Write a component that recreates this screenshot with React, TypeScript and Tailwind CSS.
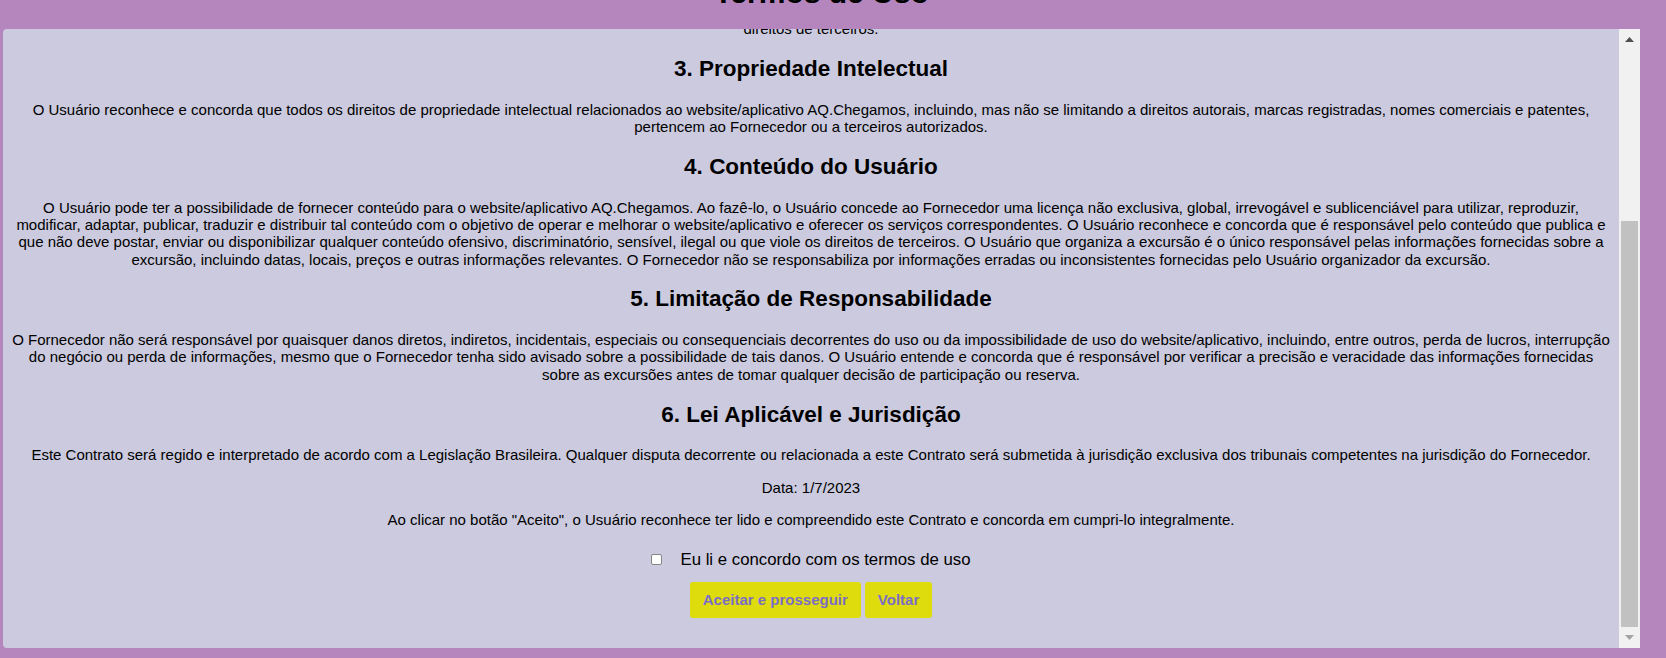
import React from "react";

const font = { fontFamily: '"Liberation Sans", Arial, sans-serif' };

function H({ children }: { children: React.ReactNode }) {
  return (
    <h2 className="text-[22.5px] leading-[26px] font-bold text-black text-center my-[18.7px]">
      {children}
    </h2>
  );
}

function P({ children }: { children: React.ReactNode }) {
  return (
    <p className="text-[15px] leading-[17.25px] text-black text-center my-[15px]">
      {children}
    </p>
  );
}

export default function App() {
  return (
    <div
      className="h-[658px] w-full bg-[#b586bd] flex flex-col overflow-hidden"
      style={font}
    >
      <h1 className="text-[30px] leading-[34.5px] font-bold text-black text-center -mt-[24px] mb-[18px] ml-[3px] mr-[26px]">
        Termos de Uso
      </h1>
      <div className="flex-1 mb-[10px] ml-[3px] mr-[26px] flex min-h-0">
        <div className="flex-1 bg-[#cbcade] rounded-l-[4px] overflow-hidden flex flex-col justify-end px-2">
          <div className="pb-[30px]">
            <H>2. Uso do Website/Aplicativo</H>
            <P>
              O Usuário concorda em utilizar o website/aplicativo AQ.Chegamos apenas para fins legais e de acordo com estes
              Termos de Uso, não podendo utilizá-lo de forma que possa prejudicar o seu funcionamento ou violar os
              <br />
              direitos de terceiros.
            </P>
            <H>3. Propriedade Intelectual</H>
            <P>
              O Usuário reconhece e concorda que todos os direitos de propriedade intelectual relacionados ao
              website/aplicativo AQ.Chegamos, incluindo, mas não se limitando a direitos autorais, marcas registradas, nomes
              comerciais e patentes, pertencem ao Fornecedor ou a terceiros autorizados.
            </P>
            <H>4. Conteúdo do Usuário</H>
            <P>
              O Usuário pode ter a possibilidade de fornecer conteúdo para o website/aplicativo AQ.Chegamos. Ao fazê-lo, o
              Usuário concede ao Fornecedor uma licença não exclusiva, global, irrevogável e sublicenciável para utilizar,
              reproduzir, modificar, adaptar, publicar, traduzir e distribuir tal conteúdo com o objetivo de operar e
              melhorar o website/aplicativo e oferecer os serviços correspondentes. O Usuário reconhece e concorda que é
              responsável pelo conteúdo que publica e que não deve postar, enviar ou disponibilizar qualquer conteúdo
              ofensivo, discriminatório, sensível, ilegal ou que viole os direitos de terceiros. O Usuário que organiza a
              excursão é o único responsável pelas informações fornecidas sobre a excursão, incluindo datas, locais, preços
              e outras informações relevantes. O Fornecedor não se responsabiliza por informações erradas ou inconsistentes
              fornecidas pelo Usuário organizador da excursão.
            </P>
            <H>5. Limitação de Responsabilidade</H>
            <P>
              O Fornecedor não será responsável por quaisquer danos diretos, indiretos, incidentais, especiais ou
              consequenciais decorrentes do uso ou da impossibilidade de uso do website/aplicativo, incluindo, entre outros,
              perda de lucros, interrupção do negócio ou perda de informações, mesmo que o Fornecedor tenha sido avisado
              sobre a possibilidade de tais danos. O Usuário entende e concorda que é responsável por verificar a precisão e
              veracidade das informações fornecidas sobre as excursões antes de tomar qualquer decisão de participação ou
              reserva.
            </P>
            <H>6. Lei Aplicável e Jurisdição</H>
            <P>
              Este Contrato será regido e interpretado de acordo com a Legislação Brasileira. Qualquer disputa decorrente ou
              relacionada a este Contrato será submetida à jurisdição exclusiva dos tribunais competentes na jurisdição do
              Fornecedor.
            </P>
            <P>Data: 1/7/2023</P>
            <P>
              Ao clicar no botão "Aceito", o Usuário reconhece ter lido e compreendido este Contrato e concorda em cumpri-lo
              integralmente.
            </P>
            <div className="mt-[22px] h-[19px] flex items-center justify-center">
              <span className="w-[11px] h-[11px] bg-white border border-[#858585] rounded-[2px] mr-[18px]" />
              <span className="text-[16.8px] leading-[19px] text-black">Eu li e concordo com os termos de uso</span>
            </div>
            <div className="mt-[13px] flex justify-center gap-[4px]">
              <button className="h-[36px] px-[13px] bg-[#dedc0c] rounded-[3px] text-[15px] font-bold text-[#7c6ec6]">
                Aceitar e prosseguir
              </button>
              <button className="h-[36px] px-[13px] bg-[#dedc0c] rounded-[3px] text-[15px] font-bold text-[#7c6ec6]">
                Voltar
              </button>
            </div>
          </div>
        </div>
        <div className="w-[21px] bg-[#f1f1f1] flex flex-col">
          <div className="h-[21px] flex items-center justify-center">
            <svg width="9" height="5" viewBox="0 0 9 5">
              <polygon points="4.5,0 9,5 0,5" fill="#505050" />
            </svg>
          </div>
          <div className="flex-1 flex flex-col justify-end">
            <div className="h-[406px] mx-[2px] bg-[#c1c1c1]" />
          </div>
          <div className="h-[21px] flex items-center justify-center">
            <svg width="9" height="5" viewBox="0 0 9 5">
              <polygon points="0,0 9,0 4.5,5" fill="#a3a3a3" />
            </svg>
          </div>
        </div>
      </div>
    </div>
  );
}
